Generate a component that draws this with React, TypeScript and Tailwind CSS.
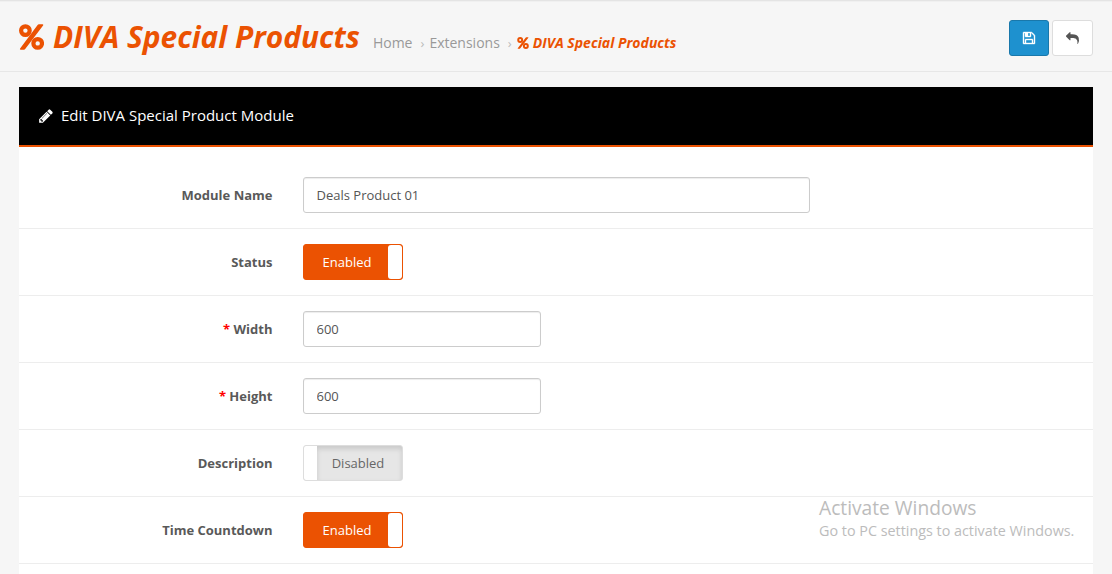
import React from "react";

const PENCIL =
  "M491 1536l91-91-235-235-91 91v107h128v128h107zm523-928q0-22-22-22-10 0-17 7l-542 542q-7 7-7 17 0 22 22 22 10 0 17-7l542-542q7-7 7-17zm-54-192l416 416-832 832h-416v-416zm683 96q0 53-37 90l-166 166-416-416 166-165q36-38 90-38 53 0 91 38l235 234q37 39 37 91z";
const FLOPPY =
  "M512 1536h768v-384h-768v384zm896 0h128v-896q0-14-10-38.5t-20-34.5l-281-281q-10-10-34-20t-39-10v416q0 40-28 68t-68 28h-576q-40 0-68-28t-28-68v-416h-128v1280h128v-416q0-40 28-68t68-28h832q40 0 68 28t28 68v416zm-384-928v-320q0-13-9.5-22.5t-22.5-9.5h-192q-13 0-22.5 9.5t-9.5 22.5v320q0 13 9.5 22.5t22.5 9.5h192q13 0 22.5-9.5t9.5-22.5zm640 32v928q0 40-28 68t-68 28h-1344q-40 0-68-28t-28-68v-1344q0-40 28-68t68-28h928q40 0 88 20t76 48l280 280q28 28 48 76t20 88z";
const REPLY =
  "M1792 1120q0 166-127 451-3 7-10.5 24t-13.5 30-13 22q-12 17-28 17-15 0-23.5-10t-8.5-25q0-9 2.5-26.5t2.5-23.5q5-68 5-123 0-112-19.5-200.5t-53.5-153.5-88-112.5-114.5-79-138.5-48-154-22.5-167.5-6.5h-224v256q0 26-19 45t-45 19-45-19l-512-512q-19-19-19-45t19-45l512-512q19-19 45-19t45 19 19 45v256h224q713 0 875 403 53 134 53 333z";

function Glyph({ d, className }: { d: string; className: string }) {
  return (
    <svg viewBox="0 0 1792 1792" fill="currentColor" className={className} aria-hidden="true">
      <path d={d} />
    </svg>
  );
}

function Percent({ className }: { className: string }) {
  return (
    <svg viewBox="0 0 25 26" fill="none" stroke="currentColor" className={className} aria-hidden="true">
      <circle cx="6.4" cy="6.6" r="4.3" strokeWidth="4.2" />
      <circle cx="18.7" cy="19.4" r="4.3" strokeWidth="4.2" />
      <path
        d="M19.9 0.3h3.8q1 0.3 0.4 1.2L6.2 25q-0.5 0.7-1.2 0.7H1.6q-1.2-0.2-0.5-1.2L18.6 1q0.5-0.7 1.3-0.7z"
        fill="currentColor"
        stroke="none"
      />
    </svg>
  );
}

function Row({ label, required, children }: { label: string; required?: boolean; children: React.ReactNode }) {
  return (
    <div className="flex h-[67px] items-center border-b border-[#ededed]">
      <label className="w-[253.5px] text-right text-[13px] leading-5 font-bold text-[#595959]">
        {required && <span className="text-[#f00]">* </span>}
        {label}
      </label>
      <div className="ml-[30.5px]">{children}</div>
    </div>
  );
}

function Field({ value, className }: { value: string; className: string }) {
  return (
    <input
      type="text"
      defaultValue={value}
      className={`block h-9 rounded-[3px] border border-[#ccc] bg-white px-[12.5px] text-[13px] text-[#555] shadow-[inset_0_1px_1px_rgba(0,0,0,0.075)] outline-none ${className}`}
    />
  );
}

function Toggle({ on }: { on: boolean }) {
  return on ? (
    <button className="flex h-9 w-[100px] overflow-hidden rounded-[3px] border border-[#eb5202] bg-[#eb5202] text-[13px] text-white">
      <span className="flex h-full w-[84px] items-center justify-center pt-0.5 pl-0.5">Enabled</span>
      <span className="h-full w-3.5 rounded-[3px] bg-white" />
    </button>
  ) : (
    <button className="flex h-9 w-[100px] overflow-hidden rounded-[3px] border border-[#ddd] bg-[#e6e6e6] text-[13px] text-[#666]">
      <span className="h-full w-[13px] rounded-l-[2px] bg-white" />
      <span className="flex h-full flex-1 items-center justify-center pt-0.5 pr-[3px] shadow-[inset_0_3px_5px_rgba(0,0,0,0.125)]">
        Disabled
      </span>
    </button>
  );
}

export default function App() {
  return (
    <div className="relative h-[574px] w-full overflow-hidden bg-[#f6f6f6] font-['Open_Sans',sans-serif] text-[13px]">
      <header className="flex h-[72px] items-start justify-between border-t border-b border-t-[#e4e4e4] border-b-[#e7e7e7] px-[19px] shadow-[inset_0_1px_0_#f0f0f0]">
        <div className="flex">
          <h1 className="flex pt-[15px] text-[29.9px] leading-[42px] font-bold whitespace-nowrap text-[#eb5202] italic">
            <Percent className="mt-2 mr-[9px] h-[26px] w-[25px]" />
            DIVA Special Products
          </h1>
          <nav className="ml-[13px] flex pt-8 text-[14px] leading-5 whitespace-nowrap text-[#999]">
            <span>Home</span>
            <span className="mr-[5px] ml-2 text-[13px] leading-[21px] text-[#bbb]">›</span>
            <span>Extensions</span>
            <span className="mr-[5px] ml-2 text-[13px] leading-[21px] text-[#bbb]">›</span>
            <span className="flex font-bold text-[#eb5202] italic">
              <Percent className="mt-1 mr-1 h-3 w-3" />
              DIVA Special Products
            </span>
          </nav>
        </div>
        <div className="flex gap-[3px] pt-[19px]">
          <button className="flex h-9 w-10 items-center justify-center rounded-[3px] border border-[#1978ab] bg-[#1e91cf] text-white">
            <svg viewBox="0 0 1792 1792" className="h-[14px] w-[14px]" fill="currentColor" stroke="currentColor" strokeWidth="50" aria-hidden="true">
              <path d={FLOPPY} />
            </svg>
          </button>
          <button className="flex h-9 w-[41px] items-center justify-center rounded-[3px] border border-[#ddd] bg-white text-[#555]">
            <Glyph d={REPLY} className="h-[13px] w-[13px]" />
          </button>
        </div>
      </header>

      <main className="mx-[19px] mt-[15px] h-[487px] bg-white">
        <div className="flex h-[60px] items-center border-b-2 border-[#eb5202] bg-black pb-0.5 pl-[19px] text-[15px] text-white">
          <Glyph d={PENCIL} className="mt-px mr-[7px] h-4 w-4" />
          <h3>Edit DIVA Special Product Module</h3>
        </div>
        <form className="pt-[15px]">
          <Row label="Module Name">
            <Field value="Deals Product 01" className="w-[507px]" />
          </Row>
          <Row label="Status">
            <Toggle on />
          </Row>
          <Row label="Width" required>
            <Field value="600" className="w-[238px]" />
          </Row>
          <Row label="Height" required>
            <Field value="600" className="w-[238px]" />
          </Row>
          <Row label="Description">
            <Toggle on={false} />
          </Row>
          <Row label="Time Countdown">
            <Toggle on />
          </Row>
        </form>
      </main>

      <div className="pointer-events-none absolute top-[496px] left-[819px] whitespace-nowrap text-[#bcbcbc]">
        <div className="text-[19.2px] leading-6">Activate Windows</div>
        <div className="text-[14.35px] leading-[22px]">Go to PC settings to activate Windows.</div>
      </div>
    </div>
  );
}
